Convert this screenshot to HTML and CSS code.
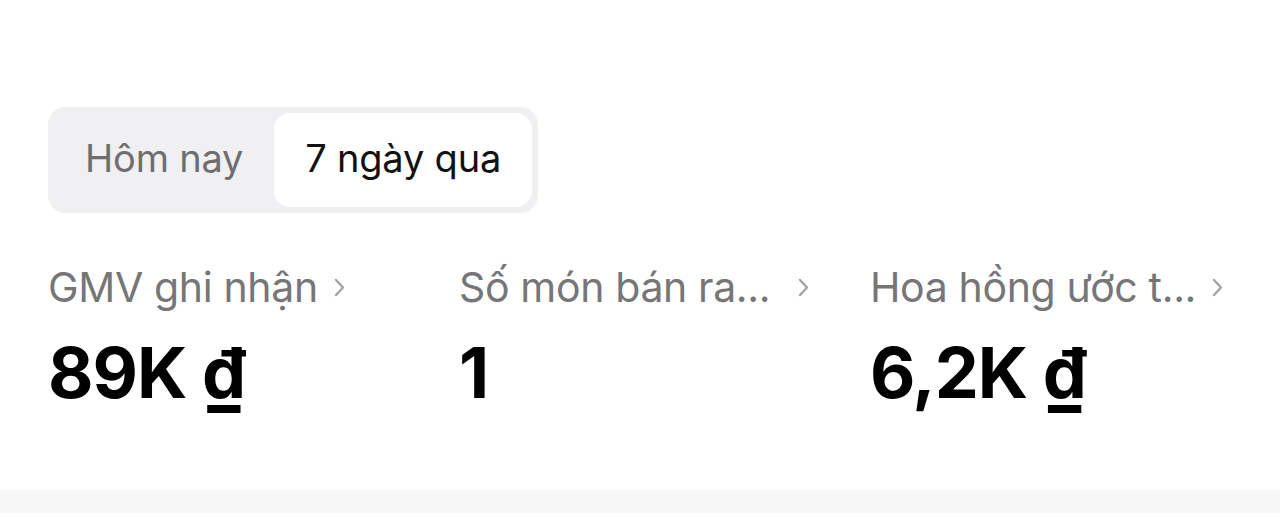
FILE: index.html
```html
<!DOCTYPE html>
<html lang="vi">
<head>
<meta charset="utf-8">
<title>Thống kê</title>
<link rel="stylesheet" href="styles.css">
</head>
<body>
<main class="page">
  <div class="segmented">
    <div class="seg">Hôm nay</div>
    <div class="seg seg-active">7 ngày qua</div>
  </div>
  <div class="stats">
    <div class="stat">
      <div class="stat-label">
        <span class="label-text">GMV ghi nhận</span>
        <svg class="chev" viewBox="0 0 11 19" width="11" height="19"><path d="M2 2l7 7.5L2 17" fill="none" stroke="#a3a3a3" stroke-width="2.4" stroke-linecap="round" stroke-linejoin="round"/></svg>
      </div>
      <div class="stat-value">89K <span class="cur">₫</span></div>
    </div>
    <div class="stat">
      <div class="stat-label">
        <span class="label-text">Số món bán ra...</span>
        <svg class="chev chev-far" viewBox="0 0 11 19" width="11" height="19"><path d="M2 2l7 7.5L2 17" fill="none" stroke="#a3a3a3" stroke-width="2.4" stroke-linecap="round" stroke-linejoin="round"/></svg>
      </div>
      <div class="stat-value">1</div>
    </div>
    <div class="stat">
      <div class="stat-label">
        <span class="label-text">Hoa hồng ước t...</span>
        <svg class="chev" viewBox="0 0 11 19" width="11" height="19"><path d="M2 2l7 7.5L2 17" fill="none" stroke="#a3a3a3" stroke-width="2.4" stroke-linecap="round" stroke-linejoin="round"/></svg>
      </div>
      <div class="stat-value">6,2K <span class="cur">₫</span></div>
    </div>
  </div>
</main>
<div class="band"></div>
</body>
</html>
```
FILE: styles.css
```css
html, body {
  margin: 0;
  padding: 0;
  background: #ffffff;
  font-family: Inter, "Noto Sans", "Liberation Sans", sans-serif;
}

.page {
  padding: 107px 48px 0;
  height: 383px;
  box-sizing: border-box;
}

.segmented {
  display: inline-flex;
  background: #f0f0f2;
  border-radius: 18px;
  padding: 6px;
}

.seg {
  height: 94px;
  box-sizing: border-box;
  display: flex;
  align-items: center;
  padding: 0 31px 4px;
  font-size: 38px;
  color: #6e6e70;
  border-radius: 16px;
  letter-spacing: -0.2px;
}

.seg-active {
  background: #ffffff;
  color: #111111;
}

.stats {
  display: grid;
  grid-template-columns: 411px 411px 411px;
  margin-top: 50px;
}

.stat-label {
  display: flex;
  align-items: center;
  gap: 16px;
  height: 48px;
}

.label-text {
  font-size: 41px;
  color: #767678;
  white-space: nowrap;
  letter-spacing: -0.35px;
}

.chev {
  flex: none;
}

.chev-far {
  margin-left: 12px;
}

.stat-value {
  margin-top: 20px;
  font-size: 70px;
  font-weight: 700;
  color: #000000;
  line-height: 84px;
  letter-spacing: -1px;
}

.band {
  height: 23px;
  background: #f7f7f7;
  margin-top: 107px;
}
```
